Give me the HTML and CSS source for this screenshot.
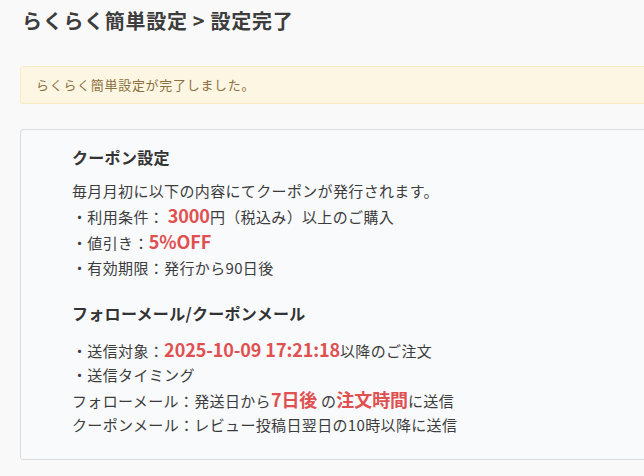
FILE: index.html
```html
<!DOCTYPE html>
<html lang="ja">
<head>
<meta charset="utf-8">
<link rel="stylesheet" href="styles.css">
</head>
<body>
<div class="page">
  <h1 class="title">らくらく簡単設定 &gt; 設定完了</h1>
  <div class="alert">らくらく簡単設定が完了しました。</div>
  <div class="card">
    <section class="sec">
      <h2 class="sec-title">クーポン設定</h2>
      <p class="line">毎月月初に以下の内容にてクーポンが発行されます。</p>
      <p class="line">・利用条件： <span class="em">3000</span>円（税込み）以上のご購入</p>
      <p class="line">・値引き：<span class="em">5%OFF</span></p>
      <p class="line">・有効期限：発行から90日後</p>
    </section>
    <section class="sec sec2">
      <h2 class="sec-title">フォローメール/クーポンメール</h2>
      <p class="line">・送信対象：<span class="em">2025-10-09 17:21:18</span>以降のご注文</p>
      <p class="line">・送信タイミング</p>
      <p class="line">フォローメール：発送日から<span class="em">7日後</span> の<span class="em">注文時間</span>に送信</p>
      <p class="line">クーポンメール：レビュー投稿日翌日の10時以降に送信</p>
    </section>
  </div>
</div>
</body>
</html>
```
FILE: styles.css
```css
html, body {
  margin: 0;
  padding: 0;
}
body {
  background: #f9f9fa;
  font-family: "Noto Sans CJK JP", "Noto Sans", sans-serif;
  color: #3c3c3c;
  width: 900px;
}
.page {
  padding: 0 0 0 20px;
}
.title {
  margin: 0;
  padding: 7px 0 0 2px;
  font-size: 20px;
  line-height: 28px;
  font-weight: 700;
  letter-spacing: 0.7px;
  color: #3d3d3d;
}
.alert {
  margin-top: 31px;
  background: #fdf6e2;
  border: 1px solid #f7ebc4;
  border-radius: 3px;
  color: #8c6f3f;
  font-size: 13px;
  line-height: 20px;
  letter-spacing: 0.7px;
  padding: 8px 15px;
}
.card {
  margin-top: 25px;
  background: #f9fafc;
  border: 1px solid #dcdcde;
  border-radius: 3px;
  padding: 14px 51px 22px;
}
.sec-title {
  margin: 0 0 8px;
  font-size: 16px;
  line-height: 26px;
  font-weight: 700;
  letter-spacing: 0.3px;
  color: #333;
}
.sec2 {
  margin-top: 20px;
}
.sec2 .sec-title {
  margin-bottom: 11px;
}
.line {
  margin: 0;
  font-size: 15px;
  line-height: 25px;
  letter-spacing: 0.35px;
  color: #3c3c3c;
}
.sec2 .line {
  line-height: 24px;
}
.em {
  color: #e05050;
  font-weight: 700;
  font-size: 18px;
  letter-spacing: -0.1px;
}
```
